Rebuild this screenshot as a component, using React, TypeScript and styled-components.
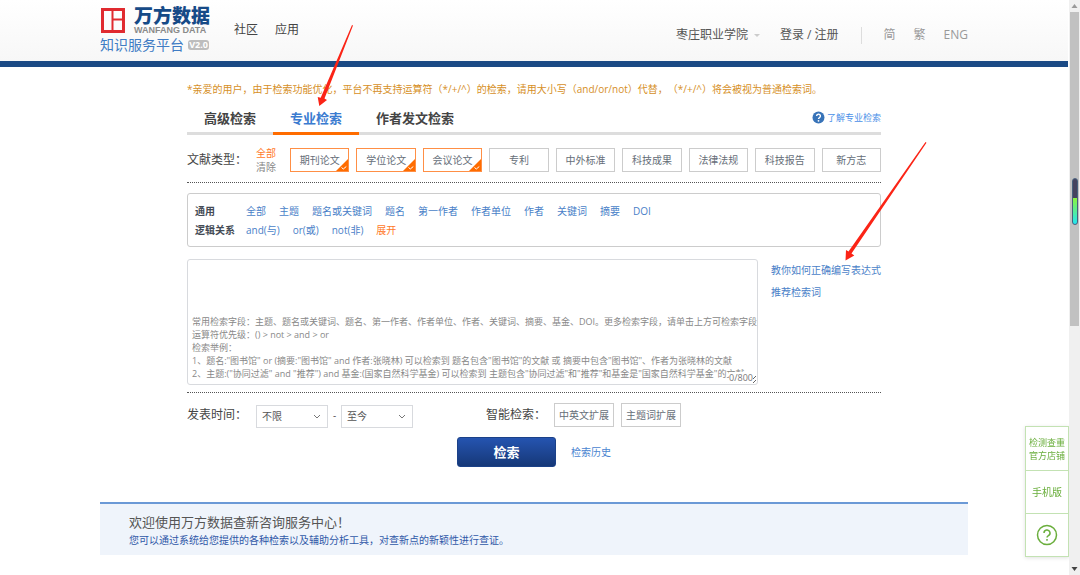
import React from "react";
import styled, { createGlobalStyle } from "styled-components";

const GlobalStyle = createGlobalStyle`
  * { box-sizing: border-box; }
  body {
    margin: 0;
    background: #fff;
    color: #555;
    font-family: "Open Sans", "Noto Sans CJK SC", sans-serif;
    font-size: 10px;
    line-height: 16px;
    text-spacing-trim: space-all;
  }
  button, select, textarea { font-family: inherit; font-size: inherit; line-height: inherit; color: inherit; }
  button { cursor: pointer; padding: 0; background: none; border: 0; }
  a { text-decoration: none; color: inherit; }
`;

const Page = styled.div`
  position: relative;
  min-height: 100vh;
  padding-right: 12px;
`;

const Header = styled.header`
  background: linear-gradient(#fff, #f7f7f7);
  border-bottom: 6px solid #1b4a85;
`;

const HeaderInner = styled.div`
  max-width: 868px;
  height: 61px;
  margin: 0 auto;
  display: flex;
  align-items: flex-start;
`;

const Logo = styled.a`
  display: flex;
  flex-direction: column;
  width: 110px;
  padding-top: 4px;
`;

const LogoTop = styled.span`
  display: flex;
  align-items: flex-end;
  gap: 8px;
`;

const LogoWords = styled.span`
  display: flex;
  flex-direction: column;
`;

const LogoName = styled.span`
  font-family: "Noto Sans CJK SC", sans-serif;
  font-size: 19px;
  line-height: 22px;
  font-weight: 900;
  color: #164a87;
  white-space: nowrap;
`;

const LogoLatin = styled.span`
  font-family: "Liberation Sans", sans-serif;
  font-size: 9px;
  line-height: 9px;
  font-weight: 700;
  color: #8a8a8a;
  white-space: nowrap;
`;

const LogoBottom = styled.span`
  display: flex;
  align-items: center;
  gap: 4px;
  font-size: 14px;
  line-height: 20px;
  color: #3f7cc4;
  white-space: nowrap;
`;

const Version = styled.span`
  width: 21px;
  border-radius: 3px;
  background: #bdbdbd;
  color: #fff;
  font-size: 9px;
  line-height: 10px;
  font-weight: 700;
  text-align: center;
`;

const MainNav = styled.nav`
  display: flex;
  gap: 17px;
  padding: 20px 0 0 24px;
  font-size: 12px;
  line-height: 20px;
  color: #444;
`;

const UserNav = styled.nav`
  display: flex;
  align-items: center;
  margin-left: auto;
  padding-top: 25px;
  font-size: 12px;
  line-height: 20px;
  white-space: nowrap;
`;

const Caret = styled.span`
  margin: 0 20px 0 6px;
  border: 3px solid transparent;
  border-top-color: #ccc;
  border-bottom: 0;
`;

const Divider = styled.span`
  width: 1px;
  height: 17px;
  margin: 0 22px;
  background: #ddd;
`;

const Languages = styled.span`
  display: flex;
  gap: 18px;
  color: #999;
`;

const Search = styled.main`
  max-width: 694px;
  margin: 0 auto;
  padding-top: 14px;
`;

const Notice = styled.p`
  margin: 0;
  color: #d68f1f;
  white-space: nowrap;
`;

const TabBar = styled.div`
  display: flex;
  align-items: center;
  height: 38px;
  border-bottom: 3px solid #ddd;
`;

const Tab = styled.button<{ $active?: boolean }>`
  height: 38px;
  margin-bottom: -3px;
  padding: 6px 17px 0;
  border-bottom: 3px solid ${(p) => (p.$active ? "#ff6c00" : "transparent")};
  font-size: 13px;
  font-weight: 700;
  color: ${(p) => (p.$active ? "#3a7bd0" : "#444")};
`;

const HelpLink = styled.a`
  display: flex;
  align-items: center;
  gap: 2px;
  margin-left: auto;
  padding-top: 6px;
  font-size: 9px;
  color: #4a8fe8;
`;

const Label = styled.span`
  font-size: 12px;
  color: #444;
  white-space: nowrap;
`;

const TypeRow = styled.div`
  display: flex;
  align-items: center;
  height: 48px;
  padding-top: 2px;
  border-bottom: 1px dotted #555;
`;

const TypeActions = styled.div`
  display: flex;
  flex-direction: column;
  width: 34px;
  margin-left: auto;
  line-height: 14px;
`;

const PlainButton = styled.button<{ $accent?: boolean }>`
  text-align: left;
  color: ${(p) => (p.$accent ? "#ff7a29" : "#888")};
`;

const TypeGrid = styled.div`
  display: grid;
  grid-template-columns: repeat(9, 1fr);
  gap: 7px;
  width: 591px;
`;

const Chip = styled.button<{ $on?: boolean }>`
  position: relative;
  height: 24px;
  border: 1px solid ${(p) => (p.$on ? "#ff8f45" : "#ccc")};
  color: #666e78;
  white-space: nowrap;
`;

const Corner = styled.svg`
  position: absolute;
  right: 0;
  bottom: 0;
`;

const FieldPanel = styled.section`
  display: flex;
  flex-direction: column;
  justify-content: center;
  height: 54px;
  margin: 10px 0 12px;
  padding: 2px 7px 0;
  border: 1px solid #ccc;
  border-radius: 3px;
`;

const FieldRow = styled.div`
  display: flex;
  gap: 13px;
  line-height: 19px;
  color: #4a7fc8;
`;

const FieldTitle = styled.strong`
  width: 38px;
  color: #444b55;
  white-space: nowrap;
`;

const ExpandLink = styled.a`
  color: #ff7a29;
`;

const Editor = styled.div`
  display: flex;
  align-items: flex-start;
  padding-bottom: 7px;
  border-bottom: 1px dotted #555;
`;

const ExpressionBox = styled.div`
  position: relative;
  display: flex;
  width: 571px;
`;

const Expression = styled.textarea`
  width: 100%;
  height: 126px;
  padding: 55px 0 0 4px;
  border: 1px solid #d8dade;
  border-radius: 3px;
  outline: 0;
  overflow: hidden;
  white-space: pre;
  font-size: 9px;
  line-height: 13px;
  resize: vertical;
  &::placeholder { color: #888; opacity: 1; }
`;

const Counter = styled.span`
  position: absolute;
  right: 5px;
  bottom: 1px;
  background: #fff;
  font-size: 9px;
  line-height: 12px;
  color: #777;
`;

const SideLinks = styled.div`
  display: flex;
  flex-direction: column;
  gap: 6px;
  margin-left: auto;
  padding-top: 3px;
  color: #4a7fc8;
  white-space: nowrap;
`;

const Options = styled.div`
  display: flex;
  align-items: center;
  height: 44px;
`;

const SelectBox = styled.span`
  position: relative;
  display: flex;
  width: 72px;
  margin-top: 2px;
`;

const Select = styled.select`
  appearance: none;
  width: 100%;
  height: 23px;
  padding: 0 5px;
  border: 1px solid #d8dade;
  border-radius: 0;
  background: #fff;
`;

const Chevron = styled.svg`
  position: absolute;
  right: 7px;
  top: 9px;
  pointer-events: none;
`;

const DateRange = styled.div`
  display: flex;
  align-items: center;
  justify-content: space-between;
  width: 157px;
  margin-left: 9px;
`;

const SmartGroup = styled.div`
  display: grid;
  grid-template-columns: 60px 60px;
  gap: 7px;
  margin-left: 8px;
`;

const SmartLabel = styled(Label)`
  margin-left: 73px;
`;

const SubmitRow = styled.div`
  display: flex;
  align-items: center;
  gap: 15px;
  padding-left: 270px;
`;

const Submit = styled.button`
  width: 99px;
  height: 30px;
  border: 1px solid #1b4188;
  border-radius: 3px;
  background: linear-gradient(#2554b0, #163878);
  color: #fff;
  font-size: 13px;
  font-weight: 700;
`;

const BlueLink = styled.a`
  color: #4a84d0;
`;

const Consult = styled.section`
  max-width: 868px;
  margin: 35px auto 0;
  padding: 8px 29px 7px;
  border-top: 2px solid #6b99d6;
  background: #eff4fb;
`;

const ConsultTitle = styled.h2`
  margin: 0;
  font-size: 13px;
  line-height: 20px;
  font-weight: 400;
  color: #555;
`;

const ConsultText = styled.p`
  margin: 0;
  color: #2f58a8;
`;

const Dock = styled.aside`
  position: fixed;
  right: 11px;
  bottom: 18px;
  display: flex;
  flex-direction: column;
  width: 44px;
  border: 1px solid #c3e2b3;
  background: #fff;
  box-shadow: 0 1px 4px rgba(0, 0, 0, 0.12);
`;

const DockItem = styled.a<{ $small?: boolean }>`
  display: flex;
  align-items: center;
  justify-content: center;
  height: 43px;
  font-size: ${(p) => (p.$small ? "9px" : "10px")};
  line-height: 13px;
  color: #6aae3c;
  text-align: center;
  white-space: nowrap;
  & + & { border-top: 1px solid #c3e2b3; }
`;

const Scrollbar = styled.div`
  position: fixed;
  top: 0;
  right: 0;
  bottom: 0;
  display: flex;
  flex-direction: column;
  align-items: center;
  width: 11px;
  padding: 4px 0;
  background: #f0f0f0;
`;

const Thumb = styled.div`
  display: flex;
  justify-content: center;
  width: 9px;
  height: 314px;
  margin: 4px 0 auto;
  padding-top: 166px;
  background: #c1c1c1;
`;

const Gauge = styled.span`
  width: 6px;
  height: 47px;
  flex: none;
  border: 1px solid #47607c;
  border-radius: 3px;
  background: linear-gradient(#45435e 42%, #8bf53c 42%, #22e6f2);
`;

const Pointers = styled.svg`
  position: absolute;
  left: 0;
  top: 0;
  pointer-events: none;
`;

const types = ["期刊论文", "学位论文", "会议论文", "专利", "中外标准", "科技成果", "法律法规", "科技报告", "新方志"];
const fields = ["全部", "主题", "题名或关键词", "题名", "第一作者", "作者单位", "作者", "关键词", "摘要", "DOI"];
const operators = ["and(与)", "or(或)", "not(非)"];
const hint = [
  "常用检索字段：主题、题名或关键词、题名、第一作者、作者单位、作者、关键词、摘要、基金、DOI。更多检索字段，请单击上方可检索字段",
  "运算符优先级：() > not > and > or",
  "检索举例：",
  '1、题名:"图书馆" or (摘要:"图书馆" and 作者:张晓林) 可以检索到 题名包含"图书馆"的文献 或 摘要中包含"图书馆"、作者为张晓林的文献',
  '2、主题:("协同过滤" and "推荐") and 基金:(国家自然科学基金) 可以检索到 主题包含"协同过滤"和"推荐"和基金是"国家自然科学基金"的文献',
].join("\n");

function YearSelect({ value, label }: { value: string; label: string }) {
  return (
    <SelectBox>
      <Select aria-label={label} defaultValue={value}>
        <option>{value}</option>
      </Select>
      <Chevron width="8" height="6" viewBox="0 0 8 6" fill="none" stroke="#777" strokeWidth="1">
        <path d="M1 1l3 3 3-3" />
      </Chevron>
    </SelectBox>
  );
}

export default function App() {
  return (
    <Page>
      <GlobalStyle />
      <Header>
        <HeaderInner>
          <Logo href="#">
            <LogoTop>
              <svg width="26" height="27" viewBox="0 0 26 27" fill="none" stroke="#e02a2f">
                <rect x="2.500" y="1.500" width="21" height="22" strokeWidth="3" />
                <path d="M12.500 2v21M13 11.500h10" strokeWidth="2" />
              </svg>
              <LogoWords>
                <LogoName>万方数据</LogoName>
                <LogoLatin>WANFANG DATA</LogoLatin>
              </LogoWords>
            </LogoTop>
            <LogoBottom>
              知识服务平台<Version>V2.0</Version>
            </LogoBottom>
          </Logo>
          <MainNav>
            <a href="#">社区</a>
            <a href="#">应用</a>
          </MainNav>
          <UserNav>
            <a href="#">枣庄职业学院</a>
            <Caret />
            <a href="#">登录 / 注册</a>
            <Divider />
            <Languages>
              <a href="#">简</a>
              <a href="#">繁</a>
              <a href="#">ENG</a>
            </Languages>
          </UserNav>
        </HeaderInner>
      </Header>

      <Search>
        <Notice>
          *亲爱的用户，由于检索功能优化，平台不再支持运算符（*/+/^）的检索，请用大小写（and/or/not）代替，（*/+/^）将会被视为普通检索词。
        </Notice>
        <TabBar>
          <Tab>高级检索</Tab>
          <Tab $active>专业检索</Tab>
          <Tab>作者发文检索</Tab>
          <HelpLink href="#">
            <svg width="13" height="13" viewBox="0 0 13 13">
              <circle cx="6.5" cy="6.5" r="6" fill="#3873b8" />
              <path d="M4.6 5a1.9 1.9 0 1 1 2.7 1.8c-.6.3-.8.5-.8 1.1" fill="none" stroke="#fff" strokeWidth="1.4" />
              <circle cx="6.5" cy="9.8" r=".9" fill="#fff" />
            </svg>
            了解专业检索
          </HelpLink>
        </TabBar>

        <TypeRow>
          <Label>文献类型：</Label>
          <TypeActions>
            <PlainButton $accent>全部</PlainButton>
            <PlainButton>清除</PlainButton>
          </TypeActions>
          <TypeGrid>
            {types.map((t, i) => (
              <Chip key={t} $on={i < 3} aria-pressed={i < 3}>
                {t}
                {i < 3 && (
                  <Corner width="12" height="12" viewBox="0 0 12 12">
                    <path d="M12 0v12H0z" fill="#ff6c00" />
                    <path d="M5.5 8.5l1.8 1.5 3-2.5" fill="none" stroke="#fff" />
                  </Corner>
                )}
              </Chip>
            ))}
          </TypeGrid>
        </TypeRow>

        <FieldPanel>
          <FieldRow>
            <FieldTitle>通用</FieldTitle>
            {fields.map((f) => (
              <a href="#" key={f}>{f}</a>
            ))}
          </FieldRow>
          <FieldRow>
            <FieldTitle>逻辑关系</FieldTitle>
            {operators.map((o) => (
              <a href="#" key={o}>{o}</a>
            ))}
            <ExpandLink href="#">展开</ExpandLink>
          </FieldRow>
        </FieldPanel>

        <Editor>
          <ExpressionBox>
            <Expression aria-label="检索表达式" wrap="off" placeholder={hint} />
            <Counter>0/800</Counter>
          </ExpressionBox>
          <SideLinks>
            <a href="#">教你如何正确编写表达式</a>
            <a href="#">推荐检索词</a>
          </SideLinks>
        </Editor>

        <Options>
          <Label>发表时间：</Label>
          <DateRange>
            <YearSelect value="不限" label="起始时间" />
            <span>-</span>
            <YearSelect value="至今" label="结束时间" />
          </DateRange>
          <SmartLabel>智能检索：</SmartLabel>
          <SmartGroup>
            <Chip>中英文扩展</Chip>
            <Chip>主题词扩展</Chip>
          </SmartGroup>
        </Options>

        <SubmitRow>
          <Submit>检索</Submit>
          <BlueLink href="#">检索历史</BlueLink>
        </SubmitRow>
      </Search>

      <Consult>
        <ConsultTitle>欢迎使用万方数据查新咨询服务中心！</ConsultTitle>
        <ConsultText>您可以通过系统给您提供的各种检索以及辅助分析工具，对查新点的新颖性进行查证。</ConsultText>
      </Consult>

      <Dock>
        <DockItem href="#" $small>检测查重<br />官方店铺</DockItem>
        <DockItem href="#">手机版</DockItem>
        <DockItem href="#" aria-label="帮助">
          <svg width="22" height="22" viewBox="0 0 22 22" fill="none" stroke="#6aae3c" strokeWidth="1.5">
            <circle cx="11" cy="11" r="9.5" />
            <path d="M8 9a3 3 0 1 1 4.4 2.6c-1 .6-1.4 1-1.4 2" />
            <path d="M11 15v1.7" />
          </svg>
        </DockItem>
      </Dock>

      <Scrollbar>
        <svg width="7" height="4" viewBox="0 0 7 4"><path d="M3.5 0L6.5 4h-6z" fill="#999" /></svg>
        <Thumb><Gauge /></Thumb>
        <svg width="7" height="4" viewBox="0 0 7 4"><path d="M3.5 4L6.5 0h-6z" fill="#444" /></svg>
      </Scrollbar>

      <Pointers width="940" height="270" viewBox="0 0 940 270" fill="#fb2416">
        <path d="M352 25l1 .5L324.500 98.500l2.500 1.500L319.300 106l-1.600-9 3 .8z" />
        <path d="M925.500 142l1 .7L851.500 253.500l2.800 2L845.500 260.500l.5-10.500 2.500 1.500z" />
      </Pointers>
    </Page>
  );
}
